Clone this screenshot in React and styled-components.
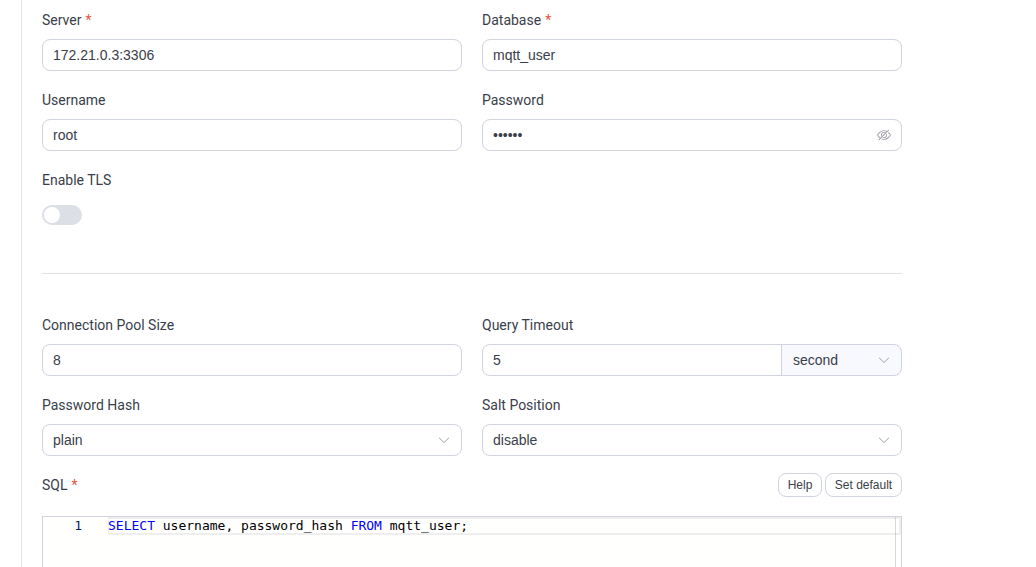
import React from "react";
import styled, { createGlobalStyle } from "styled-components";

const GlobalStyle = createGlobalStyle`
  *, *::before, *::after { box-sizing: border-box; }
  body {
    margin: 0;
    background: #fff;
    color: #303133;
    font-family: Roboto, "Liberation Sans", sans-serif;
    font-size: 14px;
    overflow: hidden;
  }
`;

const Page = styled.main`
  height: 567px;
  margin-left: 21px;
  padding: 9px 0 0 20px;
  border-left: 1px solid #e4e4ee;
  overflow: hidden;
`;

const Form = styled.form`
  width: 860px;
`;

const FieldGrid = styled.div`
  display: grid;
  grid-template-columns: 1fr 1fr;
  column-gap: 20px;
  row-gap: 18px;
`;

const Field = styled.div`
  display: flex;
  flex-direction: column;
  gap: 8px;
`;

const Label = styled.label`
  line-height: 22px;
  height: 22px;
  color: #3a3e4a;

  &::after {
    content: ${(p) => (p.$required ? '"*"' : "none")};
    margin-left: 4px;
    color: #f0523f;
  }
`;

const Control = styled.div`
  display: flex;
  align-items: center;
  height: 32px;
  padding: 0 10px;
  border: 1px solid #d0d3e0;
  border-radius: ${(p) => (p.$joined ? "8px 0 0 8px" : "8px")};
  flex: ${(p) => (p.$joined ? "1" : "none")};
  min-width: 0;
  background: #fff;
`;

const TextInput = styled.input`
  flex: 1;
  min-width: 0;
  height: 30px;
  padding: 0;
  border: 0;
  outline: 0;
  background: none;
  color: #3a3e4a;
  font: 14px "Liberation Sans", Arial, sans-serif;
`;

const Icon = styled.svg`
  width: 14px;
  height: 14px;
  fill: #a0a3ab;
  flex: none;
`;

const InputGroup = styled.div`
  display: flex;
`;

const UnitSelect = styled.div`
  display: flex;
  align-items: center;
  width: 121px;
  height: 32px;
  margin-left: -1px;
  padding: 0 10px 0 11px;
  border: 1px solid #d0d3e0;
  border-radius: 0 8px 8px 0;
  background: #f8f9fe;
`;

const SwitchTrack = styled.button`
  display: flex;
  align-items: center;
  width: 40px;
  height: 20px;
  margin: 6px 0;
  padding: 0 2px;
  border: 0;
  border-radius: 10px;
  background: #dcdfe6;
`;

const SwitchKnob = styled.span`
  width: 16px;
  height: 16px;
  border-radius: 50%;
  background: #fff;
`;

const Divider = styled.hr`
  height: 1px;
  margin: 42px 0 40px;
  border: 0;
  background: #e2e2ef;
`;

const SqlHeader = styled.div`
  display: flex;
  align-items: center;
  justify-content: space-between;
  height: 24px;
  margin-top: 17px;
`;

const ButtonRow = styled.div`
  display: flex;
  gap: 3px;
`;

const SmallButton = styled.button`
  width: ${(p) => p.$width};
  height: 24px;
  padding: 0;
  border: 1px solid #d0d3e0;
  border-radius: 8px;
  background: #fff;
  color: #3a3e4a;
  font: 12px "Liberation Sans", Arial, sans-serif;
`;

const Editor = styled.div`
  display: flex;
  height: 200px;
  margin-top: 19px;
  border: 1px solid #d0d3e0;
  background: #fffffe;
  color: #000;
  font: 13px/18px "DejaVu Sans Mono", monospace;
`;

const Gutter = styled.div`
  width: 65px;
  padding-right: 26px;
  text-align: right;
  color: #0b216f;
`;

const CodeArea = styled.div`
  position: relative;
  flex: 1;
`;

const CodeLine = styled.div`
  height: 18px;
  line-height: 14px;
  border: 2px solid #eee;
  border-left-width: 0;
  box-shadow: inset 1px 0 #eee;
  white-space: pre;
`;

const OverviewRuler = styled.div`
  position: absolute;
  top: 0;
  right: 5px;
  bottom: 0;
  width: 1px;
  background: rgba(127, 127, 127, 0.3);
`;

const Keyword = styled.span`
  color: #0000ff;
`;

const Chevron = () => (
  <Icon viewBox="0 0 1024 1024" aria-hidden="true">
    <path d="M831.872 340.864 512 652.672 192.128 340.864a30.592 30.592 0 0 0-42.752 0 29.12 29.12 0 0 0 0 41.6L489.664 714.24a32 32 0 0 0 44.672 0l340.288-331.712a29.12 29.12 0 0 0 0-41.728 30.592 30.592 0 0 0-42.752 0z" />
  </Icon>
);

const HiddenEye = () => (
  <Icon viewBox="0 0 1024 1024" aria-hidden="true">
    <path d="M876.8 156.8c0-9.6-3.2-16-9.6-22.4-6.4-6.4-12.8-9.6-22.4-9.6-9.6 0-16 3.2-22.4 9.6L736 220.8c-64-32-137.6-51.2-224-60.8-160 16-288 73.6-377.6 176C44.8 438.4 0 496 0 512s48 73.6 134.4 176c22.4 25.6 44.8 48 73.6 67.2l-86.4 89.6c-6.4 6.4-9.6 12.8-9.6 22.4 0 9.6 3.2 16 9.6 22.4 6.4 6.4 12.8 9.6 22.4 9.6 9.6 0 16-3.2 22.4-9.6l704-710.4c3.2-6.4 6.4-12.8 6.4-22.4Zm-646.4 528c-76.8-70.4-128-128-153.6-172.8 28.8-48 80-105.6 153.6-172.8C304 272 400 230.4 512 224c64 3.2 124.8 19.2 176 44.8l-54.4 54.4C598.4 300.8 560 288 512 288c-64 0-115.2 22.4-160 64s-64 96-64 160c0 48 12.8 89.6 35.2 124.8L256 707.2c-9.6-6.4-19.2-16-25.6-22.4Zm140.8-96c-12.8-22.4-19.2-48-19.2-76.8 0-44.8 16-83.2 48-112 32-28.8 67.2-48 112-48 28.8 0 54.4 6.4 73.6 19.2L371.2 588.8ZM889.6 336c-12.8-16-28.8-28.8-41.6-41.6l-48 48c73.6 67.2 124.8 124.8 150.4 169.6-28.8 48-80 105.6-153.6 172.8-73.6 67.2-172.8 108.8-284.8 115.2-51.2-3.2-99.2-12.8-140.8-28.8l-48 48c57.6 22.4 118.4 38.4 188.8 44.8 160-16 288-73.6 377.6-176C979.2 585.6 1024 528 1024 512s-48-73.6-134.4-176Z" />
    <path d="M512 672c-12.8 0-25.6-3.2-38.4-6.4l-51.2 51.2c28.8 12.8 57.6 19.2 89.6 19.2 64 0 115.2-22.4 160-64 41.6-41.6 64-96 64-160 0-32-6.4-64-19.2-89.6l-51.2 51.2c3.2 12.8 6.4 25.6 6.4 38.4 0 44.8-16 83.2-48 112-32 28.8-67.2 48-112 48Z" />
  </Icon>
);

const FormField = ({ label, required, value, type = "text", icon }) => (
  <Field>
    <Label $required={required}>{label}</Label>
    <Control>
      <TextInput type={type} defaultValue={value} aria-label={label} />
      {icon}
    </Control>
  </Field>
);

export default function App() {
  return (
    <>
      <GlobalStyle />
      <Page>
        <Form onSubmit={(e) => e.preventDefault()}>
          <FieldGrid>
            <FormField label="Server" required value="172.21.0.3:3306" />
            <FormField label="Database" required value="mqtt_user" />
            <FormField label="Username" value="root" />
            <FormField label="Password" type="password" value="public" icon={<HiddenEye />} />
            <Field>
              <Label>Enable TLS</Label>
              <SwitchTrack type="button" role="switch" aria-checked="false" aria-label="Enable TLS">
                <SwitchKnob />
              </SwitchTrack>
            </Field>
          </FieldGrid>
          <Divider />
          <FieldGrid>
            <FormField label="Connection Pool Size" value="8" />
            <Field>
              <Label>Query Timeout</Label>
              <InputGroup>
                <Control $joined>
                  <TextInput defaultValue="5" aria-label="Query Timeout" />
                </Control>
                <UnitSelect>
                  <TextInput readOnly value="second" aria-label="Timeout unit" />
                  <Chevron />
                </UnitSelect>
              </InputGroup>
            </Field>
            <FormField label="Password Hash" value="plain" icon={<Chevron />} />
            <FormField label="Salt Position" value="disable" icon={<Chevron />} />
          </FieldGrid>
          <SqlHeader>
            <Label $required>SQL</Label>
            <ButtonRow>
              <SmallButton type="button" $width="44px">Help</SmallButton>
              <SmallButton type="button" $width="77px">Set default</SmallButton>
            </ButtonRow>
          </SqlHeader>
          <Editor>
            <Gutter>1</Gutter>
            <CodeArea>
              <CodeLine>
                <Keyword>SELECT</Keyword> username, password_hash <Keyword>FROM</Keyword> mqtt_user;
              </CodeLine>
              <OverviewRuler />
            </CodeArea>
          </Editor>
        </Form>
      </Page>
    </>
  );
}
